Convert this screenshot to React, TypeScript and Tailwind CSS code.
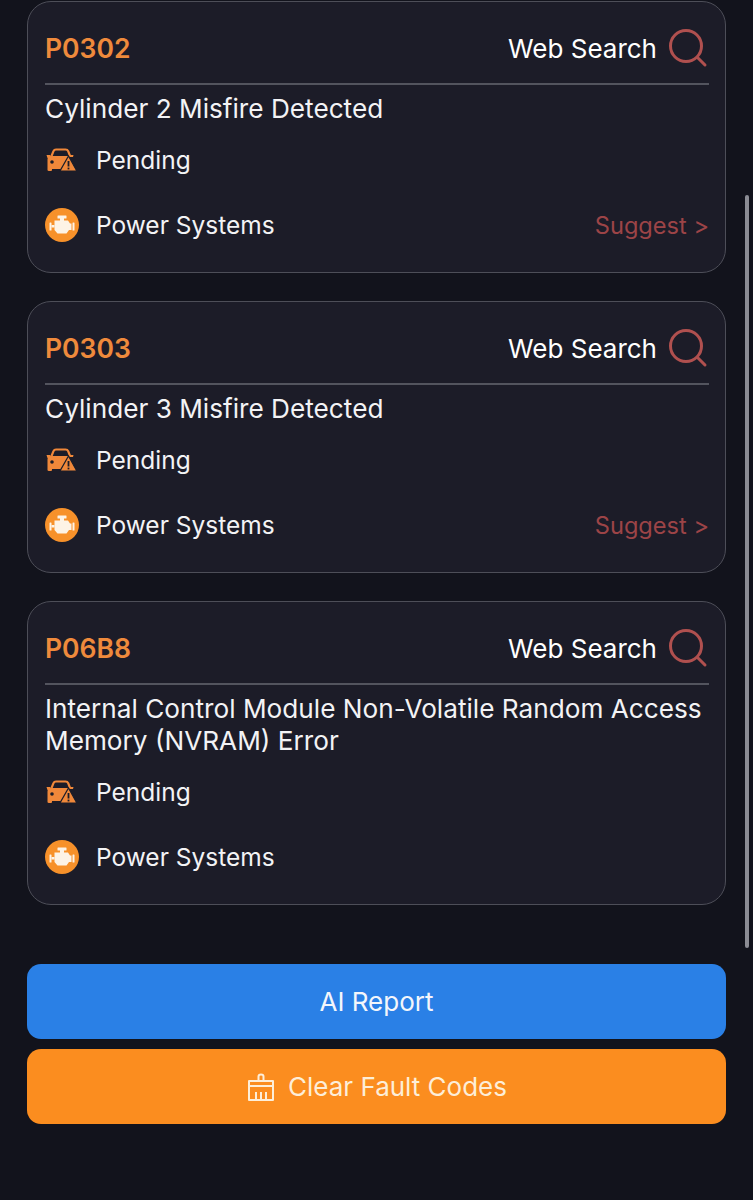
const codes = [
  { code: "P0302", title: "Cylinder 2 Misfire Detected", suggest: true },
  { code: "P0303", title: "Cylinder 3 Misfire Detected", suggest: true },
  { code: "P06B8", title: "Internal Control Module Non-Volatile Random Access Memory (NVRAM) Error", suggest: false },
];

function SearchIcon() {
  return (
    <svg width="40" height="40" viewBox="0 0 40 40" fill="none" stroke="#b0504f" strokeWidth="3" strokeLinecap="round" className="-mt-[2px] -ml-[1px] mr-[1px]">
      <circle cx="18" cy="18" r="15.5" />
      <path d="M29.5 29.5 L37 37" />
    </svg>
  );
}

function CarWarning() {
  return (
    <svg width="31" height="24" viewBox="0 0 31 24">
      <path d="M5.5 8 L7.5 3.2 Q8.2 1.5 10 1.5 H19.5 Q21.5 1.5 22.2 3.2 L24 8" fill="none" stroke="#f0883a" strokeWidth="2.2" />
      <path d="M0.5 7 H4.5 L5 10 L1.5 10 Z M24 7 H27.5 L27 9 H24 Z" fill="#f0883a" />
      <path d="M1.5 11.5 Q1.5 8 5 8 H24 L16 21 H6 V22 Q6 23 5 23 H3 Q1.5 23 1.5 22 Z" fill="#f0883a" />
      <circle cx="6" cy="14" r="1.8" fill="#1c1d29" />
      <path d="M22.5 8 L30.8 23 H14 Z" fill="#f0883a" stroke="#1c1d29" strokeWidth="1.2" />
      <rect x="21.6" y="13" width="1.8" height="5.5" fill="#1c1d29" />
      <rect x="21.6" y="19.6" width="1.8" height="1.8" fill="#1c1d29" />
    </svg>
  );
}

function EngineBadge() {
  return (
    <div className="flex h-[34px] w-[34px] shrink-0 items-center justify-center rounded-full bg-[#f7912a]">
      <svg width="26" height="20" viewBox="0 0 26 20" fill="#fdf3e6">
        <rect x="8.5" y="0.5" width="9" height="3" rx="0.5" />
        <rect x="11" y="3" width="4" height="3" />
        <path d="M5.5 5.5 H19 L21 8.5 H22.5 V15 H20 L17.5 18.5 H8.5 L5.5 15 Z" />
        <rect x="0.5" y="7.5" width="2" height="8" rx="0.6" />
        <rect x="2.5" y="10" width="3" height="2.5" />
        <rect x="23.5" y="7.5" width="2" height="8" rx="0.6" />
      </svg>
    </div>
  );
}

function Broom() {
  return (
    <svg width="30" height="30" viewBox="0 0 30 30" fill="none" stroke="#fdeed8" strokeWidth="2" strokeLinejoin="round">
      <path d="M12.5 9 V4.5 Q12.5 2.5 15 2.5 Q17.5 2.5 17.5 4.5 V9" />
      <path d="M3 9 H27 V14 H3 Z" />
      <path d="M3 14 V28 H27 V14" />
      <path d="M10 28 V20 M15 28 V20 M20 28 V20" />
    </svg>
  );
}

function CodeCard({ code, title, suggest }: { code: string; title: string; suggest: boolean }) {
  return (
    <div className="rounded-[24px] border border-[#4d4e58] bg-[#1c1c28] pl-[17px] pr-[16px] pt-[25px] pb-[30px]">
      <div className="flex h-[56px] items-start justify-between">
        <span className="text-[26.5px] leading-[42px] font-semibold text-[#ef8a3c]">{code}</span>
        <div className="mt-[1px] flex h-[42px] items-center gap-[12px]">
          <span className="text-[26px] leading-[42px] text-white">Web Search</span>
          <SearchIcon />
        </div>
      </div>
      <div className="h-[2px] bg-[#53545e]" />
      <div className="mt-[8px] text-[26.2px] leading-[32px] text-[#f3f3f5]">{title}</div>
      <div className="mt-[18px] flex h-[34px] items-center gap-[18px]">
        <div className="flex w-[33px] justify-center"><CarWarning /></div>
        <span className="text-[24.5px] text-[#f3f3f5]">Pending</span>
      </div>
      <div className="mt-[31px] flex h-[34px] items-center gap-[17px]">
        <EngineBadge />
        <span className="text-[24.5px] text-[#f3f3f5]">Power Systems</span>
        {suggest && <span className="ml-auto pt-[2px] text-[23.6px] text-[#9c4447]">{"Suggest >"}</span>}
      </div>
    </div>
  );
}

export default function App() {
  return (
    <div className="relative h-[1200px] overflow-hidden bg-[#12131c] px-[27px] pt-[1px] font-['Inter',sans-serif]">
      <div className="flex flex-col gap-[28px]">
        {codes.map((c) => (
          <CodeCard key={c.code} code={c.code} title={c.title} suggest={c.suggest} />
        ))}
      </div>

      <div className="mt-[59px] flex flex-col gap-[10px]">
        <button className="flex h-[75px] items-center justify-center rounded-[14px] bg-[#2a80e6] text-[26px] text-[#f3f6fb]">
          AI Report
        </button>
        <button className="flex h-[75px] items-center justify-center gap-[12px] rounded-[14px] bg-[#fb8d1f] text-[26px] text-[#fdeed8]">
          <Broom />
          Clear Fault Codes
        </button>
      </div>

      {/* scrollbar */}
      <div className="absolute right-[4px] top-[195px] h-[753px] w-[4px] rounded-full bg-[#8b8c94]" />
    </div>
  );
}
